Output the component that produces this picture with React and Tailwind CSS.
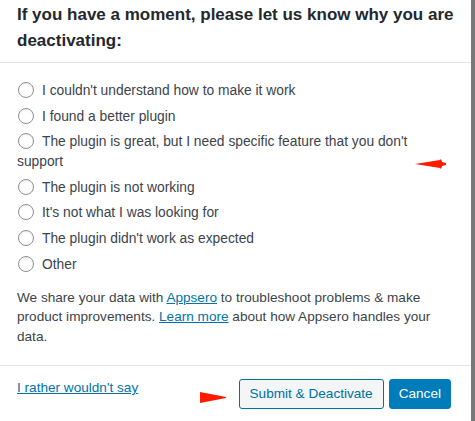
import React from 'react';

const REASONS = [
  "I couldn't understand how to make it work",
  'I found a better plugin',
  "The plugin is great, but I need specific feature that you don't support",
  'The plugin is not working',
  "It's not what I was looking for",
  "The plugin didn't work as expected",
  'Other',
];

function Radio() {
  return (
    <span className="inline-block w-4 h-4 rounded-full border border-[#8c8f94] bg-white ml-px mr-2 align-[-3px] shadow-[inset_0_1px_2px_rgba(0,0,0,0.07)]" />
  );
}

export default function App() {
  return (
    <div className="relative flex w-[475px] h-[421px] bg-white font-['Liberation_Sans',Arial,sans-serif] overflow-hidden">
      <div className="flex-1 flex flex-col min-w-0">
        {/* header */}
        <div className="px-[17px] pt-[2px] pb-[8px] border-b border-[#e2e4e7]">
          <h2 className="text-[17px] leading-[26px] font-bold text-[#23282d]">
            If you have a moment, please let us know why you are deactivating:
          </h2>
        </div>

        {/* body */}
        <div className="px-[17px] pt-[18px] pb-[19px] border-b border-[#e2e4e7] text-[#3c434a]">
          <ul className="flex flex-col gap-[5.6px] text-[13.8px]">
            {REASONS.map((r) => (
              <li key={r} className="leading-[20px] pr-[20px]">
                <label>
                  <Radio />
                  {r}
                </label>
              </li>
            ))}
          </ul>

          <p className="mt-[13px] text-[13.6px] leading-[19.5px] pr-[10px]">
            We share your data with{' '}
            <a className="text-[#0073aa] underline">Appsero</a> to troubleshoot problems & make
            product improvements. <a className="text-[#0073aa] underline">Learn more</a> about how
            Appsero handles your data.
          </p>
        </div>

        {/* footer */}
        <div className="flex items-start justify-between pl-[17px] pr-[20px] pt-[13px]">
          <a className="text-[13.6px] leading-[18px] text-[#0073aa] underline">
            I rather wouldn't say
          </a>
          <div className="flex gap-[5px]">
            <button className="h-[30px] px-[10px] rounded-[3px] border border-[#0071a1] bg-[#f3f5f6] text-[13.6px] text-[#0071a1]">
              Submit &amp; Deactivate
            </button>
            <button className="h-[30px] px-[9px] rounded-[3px] border border-[#007cba] bg-[#007cba] text-[13.6px] text-white">
              Cancel
            </button>
          </div>
        </div>
      </div>
      <div className="w-[4px] bg-[#787878]" />

      {/* annotation arrows */}
      <svg className="absolute left-[414px] top-[158px]" width="34" height="12" viewBox="0 0 34 12">
        <polygon points="1,6 26,2 27,1 28,4 32,5 32,7 28,8 27,11 26,10" fill="#ff1a00" />
      </svg>
      <svg className="absolute left-[199px] top-[391px]" width="30" height="14" viewBox="0 0 30 14">
        <polygon points="1,1 27,6 27,7 1,12" fill="#ff1a00" />
      </svg>
    </div>
  );
}
